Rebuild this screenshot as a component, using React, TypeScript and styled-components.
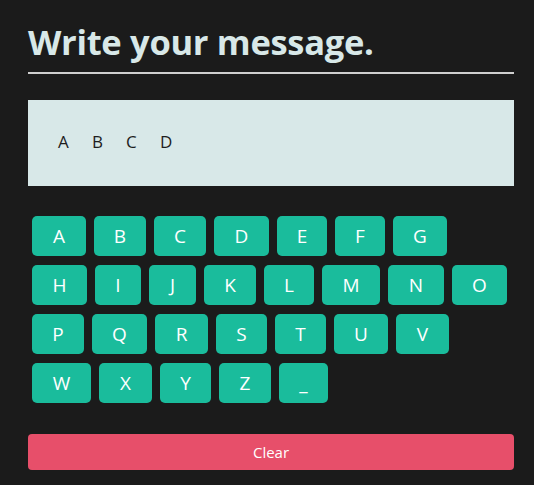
import React, { useState } from "react";
import styled, { createGlobalStyle } from "styled-components";

const Global = createGlobalStyle`
  html, body {
    margin: 0;
    padding: 0;
    background: #1b1b1b;
  }
  body {
    font-family: "Open Sans", "Noto Sans", sans-serif;
  }
`;

const Page = styled.div`
  width: 486px;
  margin-left: 28px;
  padding-top: 19px;
  display: flex;
  flex-direction: column;
`;

const Title = styled.h1`
  margin: 0;
  font-size: 34.5px;
  line-height: 46px;
  font-weight: 700;
  color: #d8e8e8;
  letter-spacing: -0.3px;
`;

const Rule = styled.div`
  height: 2px;
  background: #cfcfcf;
  margin-top: 7px;
`;

const MessageBox = styled.div`
  margin-top: 26px;
  height: 86px;
  box-sizing: border-box;
  background: #d8e8e8;
  display: flex;
  align-items: center;
  padding-left: 30px;
  padding-bottom: 4px;
`;

const MessageChar = styled.span`
  display: inline-block;
  width: 34px;
  font-size: 17px;
  color: #1e1e1e;
`;

const Keyboard = styled.div`
  margin-top: 26px;
  padding: 4px;
  display: flex;
  flex-direction: column;
  gap: 9px;
`;

const KeyRow = styled.div`
  display: flex;
  gap: 8px;
`;

const Key = styled.button<{ $w: number }>`
  width: ${(p) => p.$w}px;
  height: 40px;
  border: none;
  border-radius: 5px;
  background: #1abc9c;
  color: #ffffff;
  font-family: "Open Sans", "Noto Sans", sans-serif;
  font-size: 19px;
  padding: 0;
  cursor: pointer;
  display: flex;
  align-items: center;
  justify-content: center;
`;

const ClearButton = styled.button`
  margin-top: 27px;
  height: 36px;
  border: none;
  border-radius: 4px;
  background: #e74f6a;
  color: #ffffff;
  font-family: "Open Sans", "Noto Sans", sans-serif;
  font-size: 15px;
  cursor: pointer;
`;

const rows: [string, number][][] = [
  [["A", 54], ["B", 52], ["C", 52], ["D", 55], ["E", 50], ["F", 50], ["G", 54]],
  [["H", 55], ["I", 46], ["J", 47], ["K", 52], ["L", 50], ["M", 58], ["N", 56], ["O", 55]],
  [["P", 52], ["Q", 55], ["R", 53], ["S", 51], ["T", 51], ["U", 54], ["V", 53]],
  [["W", 59], ["X", 53], ["Y", 51], ["Z", 52], ["_", 49]],
];

export default function App() {
  const [msg, setMsg] = useState<string[]>(["A", "B", "C", "D"]);
  return (
    <>
      <Global />
      <Page>
        <Title>Write your message.</Title>
        <Rule />
        <MessageBox>
          {msg.map((c, i) => (
            <MessageChar key={i}>{c === "_" ? "\u00a0" : c}</MessageChar>
          ))}
        </MessageBox>
        <Keyboard>
          {rows.map((row, ri) => (
            <KeyRow key={ri}>
              {row.map(([k, w]) => (
                <Key key={k} $w={w} onClick={() => setMsg((m) => [...m, k])}>
                  {k}
                </Key>
              ))}
            </KeyRow>
          ))}
        </Keyboard>
        <ClearButton onClick={() => setMsg([])}>Clear</ClearButton>
      </Page>
    </>
  );
}
